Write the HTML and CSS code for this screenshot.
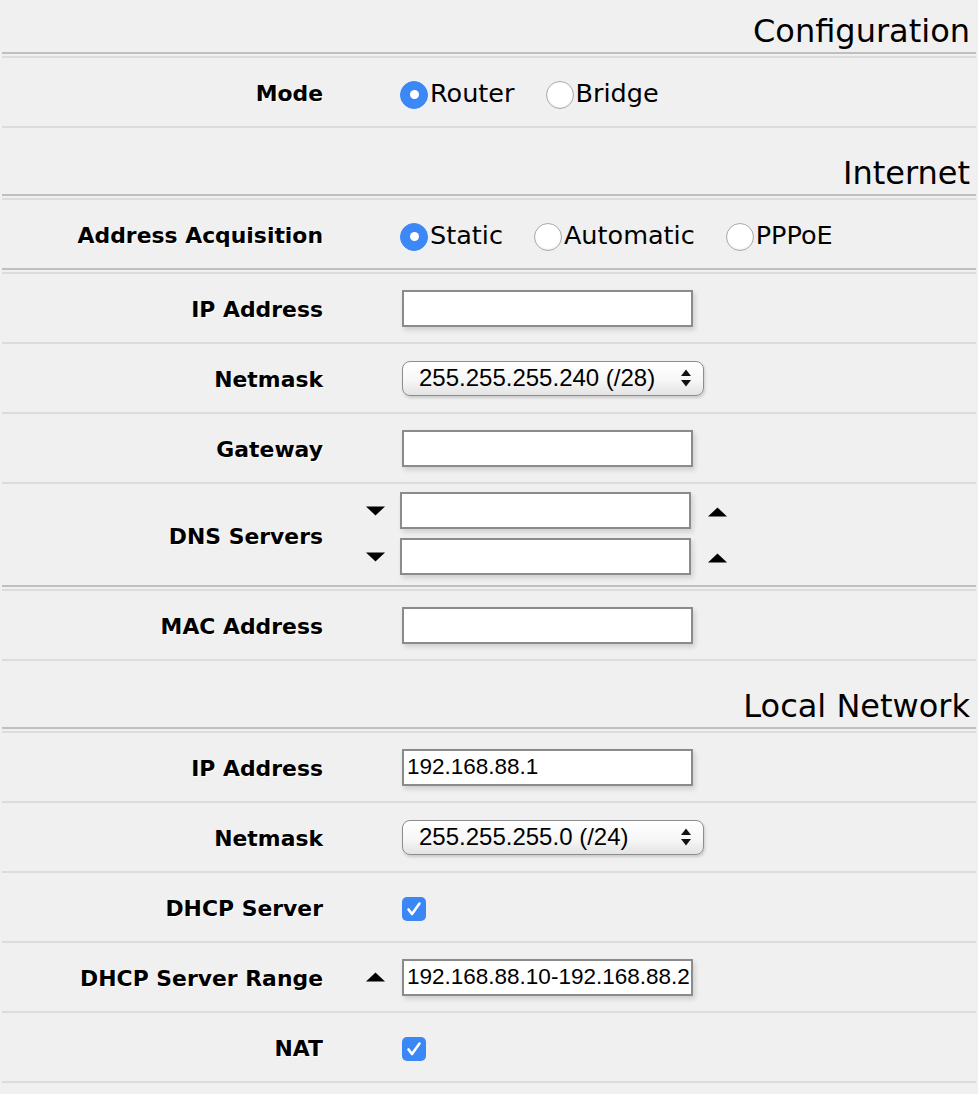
FILE: index.html
```html
<!DOCTYPE html>
<html>
<head>
<meta charset="utf-8">
<title>Quick Set</title>
<link rel="stylesheet" href="styles.css">
</head>
<body>
<div class="page">
  <div class="title first">Configuration</div>
  <div class="group">
    <div class="row">
      <div class="label">Mode</div>
      <div class="pre"></div>
      <div class="ctl radios">
        <label class="radio on"><span class="dot"></span>Router</label>
        <label class="radio"><span class="dot"></span>Bridge</label>
      </div>
    </div>
  </div>

  <div class="title">Internet</div>
  <div class="group">
    <div class="row end">
      <div class="label">Address Acquisition</div>
      <div class="pre"></div>
      <div class="ctl radios">
        <label class="radio on"><span class="dot"></span>Static</label>
        <label class="radio"><span class="dot"></span>Automatic</label>
        <label class="radio"><span class="dot"></span>PPPoE</label>
      </div>
    </div>
  </div>
  <div class="group">
    <div class="row">
      <div class="label">IP Address</div>
      <div class="pre"></div>
      <div class="ctl"><input class="input" type="text" value=""></div>
    </div>
    <div class="row">
      <div class="label">Netmask</div>
      <div class="pre"></div>
      <div class="ctl">
        <div class="select"><span>255.255.255.240 (/28)</span>
          <svg class="updown" width="10" height="18" viewBox="0 0 10 18"><polygon points="0,7 10,7 5,0.5" fill="#111"/><polygon points="0,11 10,11 5,17.5" fill="#111"/></svg>
        </div>
      </div>
    </div>
    <div class="row">
      <div class="label">Gateway</div>
      <div class="pre"></div>
      <div class="ctl"><input class="input" type="text" value=""></div>
    </div>
    <div class="row end">
      <div class="label">DNS Servers</div>
      <div class="lines">
        <div class="line">
          <div class="pre"><svg class="tri" width="19" height="10" viewBox="0 0 19 10"><polygon points="0,0.5 19,0.5 9.5,9.5" fill="#000"/></svg></div>
          <input class="input flush" type="text" value="">
          <span class="post"><svg class="tri" width="19" height="10" viewBox="0 0 19 10"><polygon points="0,9.5 19,9.5 9.5,0.5" fill="#000"/></svg></span>
        </div>
        <div class="line">
          <div class="pre"><svg class="tri" width="19" height="10" viewBox="0 0 19 10"><polygon points="0,0.5 19,0.5 9.5,9.5" fill="#000"/></svg></div>
          <input class="input flush" type="text" value="">
          <span class="post"><svg class="tri" width="19" height="10" viewBox="0 0 19 10"><polygon points="0,9.5 19,9.5 9.5,0.5" fill="#000"/></svg></span>
        </div>
      </div>
    </div>
  </div>
  <div class="group">
    <div class="row">
      <div class="label">MAC Address</div>
      <div class="pre"></div>
      <div class="ctl"><input class="input" type="text" value=""></div>
    </div>
  </div>

  <div class="title">Local Network</div>
  <div class="group">
    <div class="row">
      <div class="label">IP Address</div>
      <div class="pre"></div>
      <div class="ctl"><input class="input" type="text" value="192.168.88.1"></div>
    </div>
    <div class="row">
      <div class="label">Netmask</div>
      <div class="pre"></div>
      <div class="ctl">
        <div class="select"><span>255.255.255.0 (/24)</span>
          <svg class="updown" width="10" height="18" viewBox="0 0 10 18"><polygon points="0,7 10,7 5,0.5" fill="#111"/><polygon points="0,11 10,11 5,17.5" fill="#111"/></svg>
        </div>
      </div>
    </div>
    <div class="row">
      <div class="label">DHCP Server</div>
      <div class="pre"></div>
      <div class="ctl">
        <span class="check"><svg width="24" height="24" viewBox="0 0 24 24"><path d="M6.5 12.5 L10 17 L17.5 6.5" fill="none" stroke="#fff" stroke-width="2.6" stroke-linecap="round" stroke-linejoin="round"/></svg></span>
      </div>
    </div>
    <div class="row">
      <div class="label">DHCP Server Range</div>
      <div class="pre"><svg class="tri" width="19" height="10" viewBox="0 0 19 10"><polygon points="0,9.5 19,9.5 9.5,0.5" fill="#000"/></svg></div>
      <div class="ctl"><input class="input" type="text" value="192.168.88.10-192.168.88.254"></div>
    </div>
    <div class="row">
      <div class="label">NAT</div>
      <div class="pre"></div>
      <div class="ctl">
        <span class="check"><svg width="24" height="24" viewBox="0 0 24 24"><path d="M6.5 12.5 L10 17 L17.5 6.5" fill="none" stroke="#fff" stroke-width="2.6" stroke-linecap="round" stroke-linejoin="round"/></svg></span>
      </div>
    </div>
  </div>
</div>
</body>
</html>
```
FILE: styles.css
```css
* { box-sizing: border-box; }
html, body { margin: 0; padding: 0; }
body {
  background: #f0f0f0;
  font-family: "DejaVu Sans", Verdana, sans-serif;
  color: #000;
}
.page { padding: 0 2px; }

.title {
  height: 68px;
  display: flex;
  justify-content: flex-end;
  align-items: flex-end;
  padding: 0 6px 2px;
  font-size: 32px;
  border-bottom: 2px solid #bfbfbf;
}
.title.first { height: 54px; }

.group {
  margin-top: 2px;
  border-top: 2px solid #dcdcdc;
}

.row {
  display: grid;
  grid-template-columns: 322px 76px 1fr;
  align-items: center;
  min-height: 70px;
  border-bottom: 2px solid #dcdcdc;
}
.row.end { border-bottom-color: #bfbfbf; }

.label {
  text-align: right;
  padding: 3px 1px 0 0;
  font-weight: bold;
  font-size: 21.9px;
  text-shadow: 1px 1px 0 #fff;
}

.pre {
  display: flex;
  justify-content: flex-end;
  align-items: center;
  padding-right: 15px;
}
.tri { display: block; }

.ctl { display: flex; align-items: center; }

.radios { padding-top: 2px; font-size: 25.5px; }
.radio {
  display: inline-flex;
  align-items: center;
  margin-right: 31px;
}
.dot {
  width: 28px;
  height: 28px;
  border-radius: 50%;
  background: #fff;
  border: 1px solid #a9a9a9;
  margin: 3px 2px 0 0;
  box-shadow: inset 0 -1px 2px rgba(0,0,0,0.08);
  display: flex;
  align-items: center;
  justify-content: center;
  flex: none;
}
.radio.on .dot { background: #3b88f6; border-color: #3b88f6; box-shadow: none; }
.radio.on .dot::after {
  content: "";
  width: 9px;
  height: 9px;
  border-radius: 50%;
  background: #fff;
}

.input {
  width: 291px;
  height: 37px;
  margin: 0 0 0 2px;
  border: 2px solid #8b8b8b;
  border-radius: 0;
  background: #fff;
  padding: 0 2px 0 3px;
  font: 22.5px "Liberation Sans", Arial, sans-serif;
  color: #000;
  box-shadow: 2px 3px 5px rgba(0,0,0,0.14);
  outline: none;
}
.input.flush { margin-left: 0; }

.select {
  width: 302px;
  height: 35px;
  margin-left: 2px;
  border: 1.5px solid #8d8d8d;
  border-radius: 8px;
  background: linear-gradient(#ffffff, #f7f7f7 55%, #e3e3e3);
  box-shadow: 1px 2px 3px rgba(0,0,0,0.16);
  display: flex;
  align-items: center;
  justify-content: space-between;
  padding: 0 12px 0 16px;
  font: 24px "Liberation Sans", Arial, sans-serif;
}
.updown { display: block; }

.check {
  width: 24px;
  height: 24px;
  margin: 4px 0 0 2px;
  border-radius: 5px;
  background: #3b87f6;
  display: flex;
}

.lines {
  grid-column: 2 / 4;
  display: flex;
  flex-direction: column;
  gap: 9px;
  padding: 8px 0 10px;
}
.line {
  display: grid;
  grid-template-columns: 76px auto auto;
  justify-content: start;
  align-items: center;
}
.post { margin-left: 17px; display: flex; padding-top: 3px; }
```
